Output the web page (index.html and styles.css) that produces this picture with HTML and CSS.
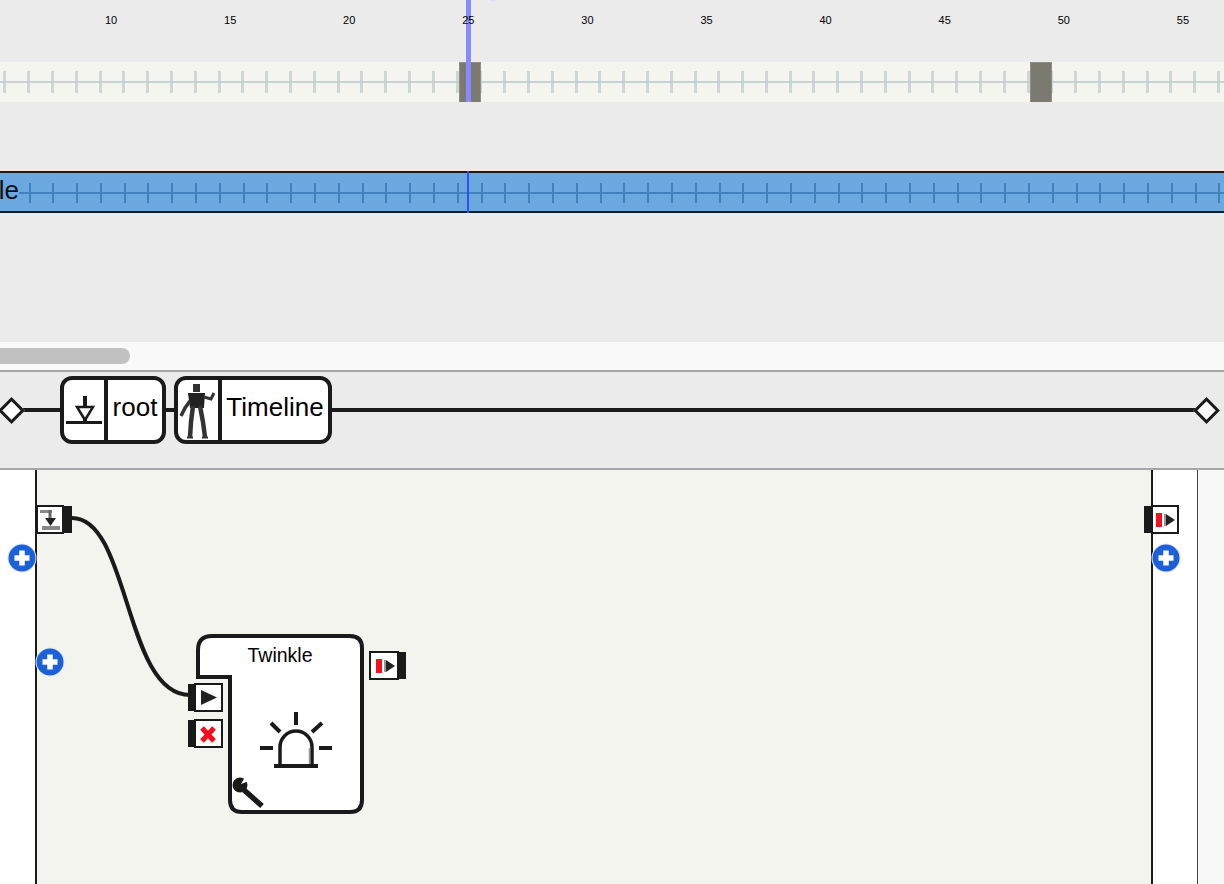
FILE: index.html
```html
<!DOCTYPE html>
<html lang="en">
<head>
    <meta charset="UTF-8">
    <title>Twinkle Timeline</title>
    <link rel="stylesheet" href="styles.css">
</head>
<body>
    <div id="timeline">
        <div class="ruler">
            <span>10</span><span>15</span><span>20</span><span>25</span><span>30</span>
            <span>35</span><span>40</span><span>45</span><span>50</span><span>55</span>
        </div>
        <div class="track"><div class="ticks" id="track-ticks"></div></div>
        <div class="clip">
            <span class="clip-name">Twinkle</span>
            <div class="ticks" id="clip-ticks"></div>
        </div>

        <!-- things that sit over the tracks -->
        <div class="keyframe key-a"></div>
        <div class="keyframe key-b"></div>
        <div class="playhead"></div>
        <div class="playhead-clip"></div>
        <div class="top-speck"></div>
    </div>

    <div id="scroll-strip"><div class="scroll-thumb"></div></div>

    <div id="crumbs">
        <div class="diamond diamond-left"></div>
        <div class="rail rail-first"></div>
        <div class="crumb">
            <div class="crumb-icon">
                <svg width="40" height="60" viewBox="64 380 40 60">
                    <path d="M85 396V421" class="ink" stroke-width="4"/>
                    <path d="M77 407H93L85 420Z" fill="#fff" class="ink" stroke-width="2.5"/>
                    <path d="M85 396V407" class="ink" stroke-width="4"/>
                    <path d="M66 422.500H102" class="ink" stroke-width="3"/>
                </svg>
            </div>
            <div class="crumb-label label-root">root</div>
        </div>
        <div class="rail rail-mid"></div>
        <div class="crumb">
            <div class="crumb-icon">
                <svg width="40" height="60" viewBox="178 380 40 60">
                    <rect x="193" y="384" width="7" height="8" fill="#333"/>
                    <path d="M188 393H205L204 408H190Z" fill="#222"/>
                    <path d="M204 397L211 399L214 393" fill="none" class="grey" stroke-width="3"/>
                    <path d="M190 401L185 408L181 416" fill="none" class="grey" stroke-width="3.500"/>
                    <path d="M193 406L191 422L190 437" fill="none" class="grey" stroke-width="4.500"/>
                    <path d="M200 406L203 422L205 437" fill="none" class="grey" stroke-width="4.500"/>
                    <path d="M187 437.500H193M202 437.500H208" class="grey" stroke-width="2"/>
                </svg>
            </div>
            <div class="crumb-label label-timeline">Timeline</div>
        </div>
        <div class="rail rail-last"></div>
        <div class="diamond diamond-right"></div>
    </div>

    <div id="canvas">
        <div class="gutter gutter-left"></div>
        <div class="sheet"></div>
        <div class="gutter gutter-right"></div>
        <div class="margin-right"></div>

        <svg class="diagram" width="1224" height="414" viewBox="0 470 1224 414">
            <defs>
                <g id="plus">
                    <circle r="14.500" fill="#dfe8f8"/>
                    <circle r="13.500" fill="#1c60d8"/>
                    <path d="M-7.500 0H7.500M0 -7.500V7.500" stroke="#fff" stroke-width="5.500"/>
                </g>
                <g id="out-icon">
                    <rect x="0" y="0" width="6" height="14" fill="#f4101f"/>
                    <rect x="8" y="1" width="2" height="12" fill="#999"/>
                    <path d="M10 1L19 7L10 13Z" fill="#222"/>
                </g>
            </defs>

            <path d="M72 518C130 518 124 695 190 695" fill="none" class="ink" stroke-width="4"/>

            <!-- left input -->
            <rect x="63" y="506" width="9" height="27" fill="#1a1a1a"/>
            <rect x="37" y="506" width="26" height="27" fill="#fff" class="ink" stroke-width="2"/>
            <path d="M40 511.500H52" stroke="#888" stroke-width="3"/>
            <path d="M50 510V519" stroke="#666" stroke-width="3"/>
            <path d="M45 518H56L50.500 526Z" fill="#222"/>
            <path d="M42 528H60" stroke="#888" stroke-width="4"/>

            <!-- right output -->
            <rect x="1144" y="506" width="8" height="27" fill="#1a1a1a"/>
            <rect x="1152" y="506" width="26" height="27" fill="#fff" class="ink" stroke-width="2"/>
            <use href="#out-icon" x="1156" y="513"/>

            <use href="#plus" x="22" y="558"/>
            <use href="#plus" x="50" y="662"/>
            <use href="#plus" x="1166" y="558"/>

            <!-- Twinkle node -->
            <path d="M212 636H350Q362 636 362 648V800Q362 812 350 812H242Q230 812 230 800V677H198V650Q198 636 212 636Z" fill="#fff" class="ink" stroke-width="4"/>
            <text x="280" y="662" class="node-title">Twinkle</text>

            <rect x="188" y="684" width="7" height="27" fill="#1a1a1a"/>
            <rect x="195" y="684" width="27" height="27" fill="#fff" class="ink" stroke-width="2"/>
            <path d="M201 690L217 697.500L201 705Z" fill="#222"/>

            <rect x="188" y="720" width="7" height="27" fill="#1a1a1a"/>
            <rect x="195" y="720" width="27" height="27" fill="#fff" class="ink" stroke-width="2"/>
            <path d="M202 728L214 741M214 728L202 741" stroke="#f40d1c" stroke-width="5"/>

            <rect x="398" y="652" width="8" height="27" fill="#1a1a1a"/>
            <rect x="370" y="652" width="28" height="27" fill="#fff" class="ink" stroke-width="2"/>
            <use href="#out-icon" x="376" y="659"/>

            <!-- alarm light -->
            <path d="M280 764V747A16 16 0 0 1 312 747V764" fill="none" class="ink" stroke-width="3.500"/>
            <path d="M309.500 748V764" stroke="#999" stroke-width="1.500"/>
            <path d="M274 766H318" class="ink" stroke-width="4"/>
            <path d="M296 712V725M271 723L280 732M322 723L312 732M260 748H273M319 748H332" class="ink" stroke-width="4"/>

            <!-- wrench -->
            <path d="M244 790L262 806" class="ink" stroke-width="5.500"/>
            <circle cx="240" cy="785" r="7.500" fill="#1a1a1a"/>
            <path d="M241 784L245 777L249 781Z" fill="#fff"/>
        </svg>
    </div>

    <script>
        // Tick marks for both tracks, one per frame
        ['track-ticks', 'clip-ticks'].forEach((id) => {
            const row = document.getElementById(id);
            for (let i = 0; i < 52; i++) {
                const tick = document.createElement('div');
                tick.className = 'tick';
                row.appendChild(tick);
            }
        });
    </script>
</body>
</html>
```

FILE: styles.css
```css
html, body {
    margin: 0;
    padding: 0;
}
body {
    width: 1224px;
    height: 884px;
    overflow: hidden;
    background-color: #ebebeb;
    font-family: "Liberation Sans", Arial, sans-serif;
    color: #000;
}
#timeline {
    position: relative;
    height: 342px;
    overflow: hidden;
}
.ruler {
    display: flex;
    height: 62px;
    margin-left: 51.5px;
    padding-top: 14px;
    box-sizing: border-box;
    font-size: 11px;
    line-height: 13px;
}
.ruler span {
    flex: 0 0 119.1px;
    position: relative;
    z-index: 1;
    text-align: center;
}
.track {
    height: 40px;
    padding: 9px 0;
    box-sizing: border-box;
    background-color: #f4f5ef;
}
.ticks {
    display: flex;
    overflow: hidden;
    background-repeat: no-repeat;
    background-size: 100% 2px;
}
.tick {
    flex: 0 0 23.8px;
    box-sizing: border-box;
}
#track-ticks {
    height: 22px;
    padding-left: 3.4px;
    background-image: linear-gradient(#c6d3d4, #c6d3d4);
    background-position: 0 10px;
}
#track-ticks .tick {
    border-left: 3px solid rgba(190, 205, 207, 0.75);
}
.clip {
    display: flex;
    align-items: center;
    height: 42px;
    margin-top: 69px;
    box-sizing: border-box;
    border-top: 2px solid #1a1a1a;
    border-bottom: 2px solid #1a1a1a;
    background-color: #6ca8e0;
    overflow: hidden;
}
.clip-name {
    flex: none;
    width: 19px;
    font-size: 26px;
    line-height: 34px;
    margin-top: -4px;
    color: #111;
    direction: rtl;
    white-space: nowrap;
    overflow: hidden;
    position: relative;
    z-index: 1;
}
#clip-ticks {
    flex: 1;
    height: 20px;
    margin-top: 1px;
    padding-left: 9.5px;
    background-image: linear-gradient(#3f80bd, #3f80bd);
    background-position: 0 9px;
}
#clip-ticks .tick {
    border-left: 2px solid #3f80bd;
}
.keyframe {
    position: absolute;
    top: 62px;
    width: 22px;
    height: 40px;
    box-sizing: border-box;
    border: 1px solid #8f8f84;
    border-bottom: 0;
    background-color: #7a7a70;
}
.key-a {
    left: 459px;
}
.key-b {
    left: 1030px;
}
.playhead {
    position: absolute;
    left: 466px;
    top: 0;
    width: 5px;
    height: 102px;
    background-color: #8a8aff;
}
.playhead-clip {
    position: absolute;
    left: 467px;
    top: 171px;
    width: 2px;
    height: 42px;
    background-color: #3450e4;
}
.top-speck {
    position: absolute;
    left: 491px;
    top: 0;
    width: 4px;
    height: 1px;
    background-color: #dcdcff;
}
#scroll-strip {
    height: 28px;
    padding-top: 6px;
    box-sizing: border-box;
    background-color: #f9f9f9;
}
.scroll-thumb {
    width: 130px;
    height: 16px;
    border-radius: 0 8px 8px 0;
    background-color: #c1c1c1;
}
#crumbs {
    display: flex;
    align-items: center;
    height: 100px;
    padding: 4px 0 24px;
    box-sizing: border-box;
    border-top: 2px solid #a6a6a6;
    border-bottom: 2px solid #a6a6a6;
    background-color: #ebebeb;
}
.rail {
    height: 4px;
    background-color: #1a1a1a;
}
.rail-first {
    width: 39px;
}
.rail-mid {
    width: 8px;
}
.rail-last {
    flex: 1;
}
.diamond {
    flex: none;
    width: 19px;
    height: 19px;
    box-sizing: border-box;
    border: 3.5px solid #1a1a1a;
    background-color: #fff;
    transform: rotate(45deg);
}
.diamond-left {
    margin-left: 2px;
}
.diamond-right {
    margin-right: 8px;
}
.crumb {
    display: flex;
    flex: none;
    height: 68px;
    box-sizing: border-box;
    border: 4px solid #1a1a1a;
    border-radius: 12px;
    background-color: #fff;
}
.crumb-icon {
    display: flex;
    width: 40px;
    border-right: 4px solid #1a1a1a;
}
.crumb-label {
    font-size: 26px;
    line-height: 54px;
    text-align: center;
    white-space: nowrap;
}
.label-root {
    width: 54px;
}
.label-timeline {
    width: 106px;
}
#canvas {
    position: relative;
    display: flex;
    height: 414px;
}
.gutter {
    background-color: #fff;
    box-sizing: border-box;
}
.gutter-left {
    width: 37px;
    border-right: 2px solid #1a1a1a;
}
.sheet {
    flex: 1;
    background-color: #f4f4ef;
}
.gutter-right {
    width: 47px;
    border-left: 2px solid #1a1a1a;
    border-right: 1px solid #444;
}
.margin-right {
    width: 26px;
    background-color: #f8f8f8;
}
.diagram {
    position: absolute;
    left: 0;
    top: 0;
}
.ink {
    stroke: #1a1a1a;
}
.grey {
    stroke: #333;
}
.node-title {
    font-family: "Liberation Sans", Arial, sans-serif;
    font-size: 19.5px;
    text-anchor: middle;
    fill: #000;
}
```
